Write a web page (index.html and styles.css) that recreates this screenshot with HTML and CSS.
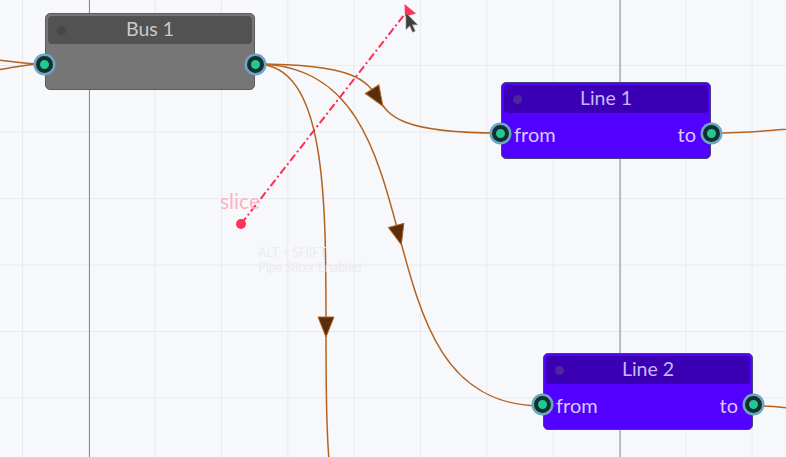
FILE: index.html
```html
<!DOCTYPE html>
<html lang="en">
<head>
<meta charset="utf-8">
<title>Pipe editor</title>
<link rel="stylesheet" href="styles.css">
</head>
<body>
<div class="canvas">
  <svg class="wires" width="786" height="457" viewBox="0 0 786 457">
    <g class="wire">
      <path d="M -30 58 C 10 60, 20 64, 43 64"/>
      <path d="M -30 73 C 10 70, 20 64, 43 64"/>
      <path d="M 256 64 C 456 64, 300 133, 500 133"/>
      <path d="M 256 64 C 451 64, 347 406, 542 406"/>
      <path d="M 256 64 C 396 64, 256 592, 396 592"/>
      <path d="M 712 133 C 760 133, 770 129, 830 127"/>
      <path d="M 755 406 C 790 406, 800 411, 840 413"/>
    </g>
    <g class="arrow">
      <polygon points="-11,-8 9,0 -11,8" transform="translate(378 98.5) rotate(57.5)"/>
      <polygon points="-11,-8 9,0 -11,8" transform="translate(399 236) rotate(75)"/>
      <polygon points="-11,-8 9,0 -11,8" transform="translate(326 328) rotate(90)"/>
    </g>
    <g class="slicer">
      <path class="slice-line" d="M 241 224 L 408 10"/>
      <circle cx="241" cy="224" r="5"/>
      <polygon points="404.5,4 416,13.5 405,16.5"/>
    </g>
    <path class="cursor" d="M 406 13 L 406 29.5 L 409.8 25.8 L 412.6 32.2 L 415.2 31 L 412.4 24.8 L 417.6 24.8 Z"/>
  </svg>

  <div class="label slice-label">slice</div>
  <div class="label hint">ALT + SHIFT:<br>Pipe Slicer Enabled</div>

  <div class="node bus" style="left:45px; top:13px;">
    <div class="node-head"><span class="dot"></span><span class="title">Bus 1</span></div>
    <div class="node-body"></div>
    <span class="port port-in"></span>
    <span class="port port-out"></span>
  </div>

  <div class="node line" style="left:501px; top:82px;">
    <div class="node-head"><span class="dot"></span><span class="title">Line 1</span></div>
    <div class="node-body"><span>from</span><span>to</span></div>
    <span class="port port-in"></span>
    <span class="port port-out"></span>
  </div>

  <div class="node line" style="left:543px; top:353px;">
    <div class="node-head"><span class="dot"></span><span class="title">Line 2</span></div>
    <div class="node-body"><span>from</span><span>to</span></div>
    <span class="port port-in"></span>
    <span class="port port-out"></span>
  </div>
</div>
</body>
</html>
```

FILE: styles.css
```css
* { box-sizing: border-box; }

html, body {
  margin: 0;
  padding: 0;
  width: 786px;
  height: 457px;
  overflow: hidden;
}

body {
  font-family: Lato, "Open Sans", sans-serif;
  background: #f7f8fb;
}

.canvas {
  position: relative;
  width: 786px;
  height: 457px;
  overflow: hidden;
  background-color: #f7f8fb;
  background-image:
    linear-gradient(to right, #8a8a8a 1px, transparent 1px),
    linear-gradient(to right, #e9eaee 1px, transparent 1px),
    linear-gradient(to bottom, #e9eaee 1px, transparent 1px);
  background-size: 530.6px 100%, 66.33px 100%, 100% 66.5px;
  background-position: 89px 0, 22px 0, 0 65px;
}

.wires {
  position: absolute;
  left: 0;
  top: 0;
}

.wire path {
  fill: none;
  stroke: #b5631f;
  stroke-width: 1.5;
}

.arrow polygon {
  fill: #5a2d0c;
  stroke: #b5631f;
  stroke-width: 1;
  stroke-linejoin: miter;
}

.slice-line {
  fill: none;
  stroke: #ff2d55;
  stroke-width: 2;
  stroke-dasharray: 8 3 2 3;
}

.slicer circle,
.slicer polygon {
  fill: #ff3358;
}

.cursor {
  fill: #3f3f3f;
  stroke: #8d8d8d;
  stroke-width: 0.6;
  stroke-linejoin: round;
}

.label {
  position: absolute;
  white-space: nowrap;
}

.slice-label {
  left: 220px;
  top: 189px;
  font-size: 21px;
  line-height: 24px;
  color: #ffb3c0;
}

.hint {
  left: 258px;
  top: 245px;
  font-size: 12.5px;
  line-height: 15px;
  color: #eaebef;
}

.node {
  position: absolute;
  width: 210px;
  height: 77px;
  padding: 2px;
  border: 1px solid #5a5a5a;
  border-radius: 5px;
  display: flex;
  flex-direction: column;
  gap: 1px;
}

.node-head {
  height: 28px;
  border-radius: 4px;
  display: grid;
  grid-template-columns: 26px 1fr 26px;
  align-items: center;
}

.dot {
  width: 9px;
  height: 9px;
  border-radius: 50%;
  justify-self: center;
}

.title {
  text-align: center;
  font-size: 19.5px;
  line-height: 24px;
  padding-bottom: 3px;
}

.node-body {
  flex: 1;
  display: flex;
  align-items: center;
  justify-content: space-between;
  padding: 0 12px 3px 10px;
  font-size: 20px;
}

.bus {
  background: #767676;
  border-color: #5c5c5c;
}
.bus .node-head { background: #525252; }
.bus .dot { background: #474747; }
.bus .title { color: #cacaca; }

.line {
  background: #5200ff;
  border-color: #45417a;
}
.line .node-head { background: #3c00b4; }
.line .dot { background: #4a279e; }
.line .title { color: #c6b6ff; }
.line .node-body { color: #d8caff; }

.port {
  position: absolute;
  top: 42px;
  width: 17px;
  height: 17px;
  border-radius: 50%;
  background: #22c993;
  border: 4px solid #12302d;
  box-shadow: 0 0 0 2.5px #6ca6c2;
}
.port-in { left: -10px; }
.port-out { right: -10px; }
```
